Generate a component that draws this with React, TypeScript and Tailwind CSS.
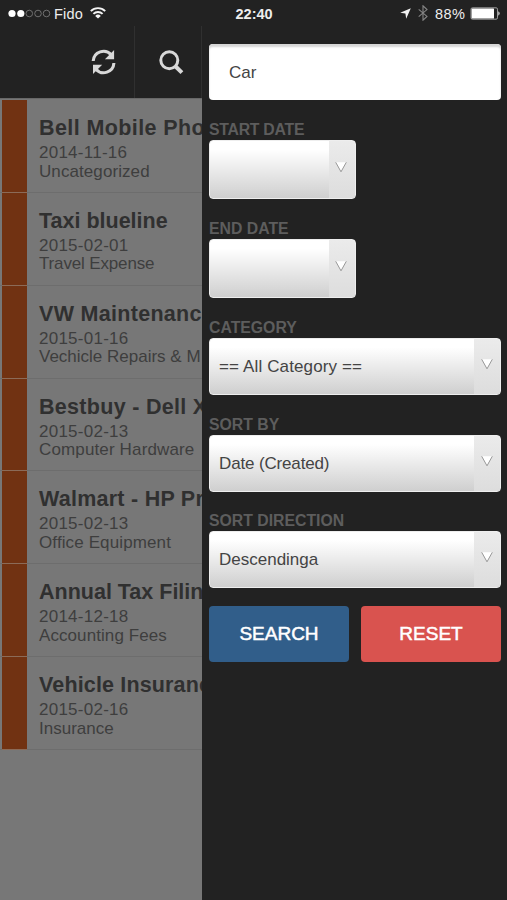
import React from "react";

const expenses = [
  { title: "Bell Mobile Phon", date: "2014-11-16", category: "Uncategorized", titleTracking: "tracking-[0.4px]", tracking: "tracking-[0.08px]" },
  { title: "Taxi blueline", date: "2015-02-01", category: "Travel Expense", titleTracking: "", tracking: "tracking-[-0.15px]" },
  { title: "VW Maintenanc", date: "2015-01-16", category: "Vechicle Repairs & M", titleTracking: "tracking-[0.3px]", tracking: "" },
  { title: "Bestbuy - Dell X", date: "2015-02-13", category: "Computer Hardware", titleTracking: "tracking-[0.3px]", tracking: "tracking-[0.14px]" },
  { title: "Walmart - HP Pr", date: "2015-02-13", category: "Office Equipment", titleTracking: "tracking-[0.25px]", tracking: "tracking-[0.12px]" },
  { title: "Annual Tax Filin", date: "2014-12-18", category: "Accounting Fees", titleTracking: "", tracking: "tracking-[0.08px]" },
  { title: "Vehicle Insuranc", date: "2015-02-16", category: "Insurance", titleTracking: "tracking-[0.15px]", tracking: "" },
];

function StatusBar() {
  return (
    <header className="relative flex h-[26px] shrink-0 items-center text-[14.5px] leading-none text-[#eeeeee]">
      <svg className="ml-[8px] h-[9px] w-[43px]" viewBox="0 0 43 9">
        <circle cx="4" cy="4.5" r="3.6" fill="#fff" />
        <circle cx="12.8" cy="4.5" r="3.6" fill="#fff" />
        {[21.3, 30, 38.5].map((x) => (
          <circle key={x} cx={x} cy="4.5" r="3.3" fill="none" stroke="#777" strokeWidth="0.9" />
        ))}
      </svg>
      <span className="ml-[3px] w-[35px] pt-[2px] tracking-[0.2px]">Fido</span>
      <svg className="ml-px h-[12px] w-[16px]" viewBox="0 0 16 12" fill="none" stroke="#f4f4f4" strokeWidth="1.9">
        <path d="M.8 4.1a10.2 10.2 0 0 1 14.4 0" />
        <path d="M3.4 6.9a6.5 6.5 0 0 1 9.2 0" />
        <path d="M8 11.6 5.2 8.9a4 4 0 0 1 5.6 0z" fill="#f4f4f4" stroke="none" />
      </svg>
      <span className="absolute left-[235.5px] pt-[3px] font-bold">22:40</span>
      <div className="ml-auto flex items-center pr-[6px]">
        <svg className="h-[11px] w-[11px]" viewBox="0 0 11 11">
          <path d="M10.8.2 6.2 10.8 5.4 5.6.2 4.8z" fill="#f2f2f2" />
        </svg>
        <svg className="ml-[7px] h-[16px] w-[10px]" viewBox="0 0 10 16" fill="none" stroke="#858585" strokeWidth="1.1">
          <path d="M.7 4.3 9 11.4 5 15.2V.8l4 3.8-8.3 7.1" />
        </svg>
        <span className="ml-[7px] w-[31px] whitespace-nowrap pt-[2px] tracking-[0.45px]">88%</span>
        <svg className="ml-[4px] h-[13px] w-[31px]" viewBox="0 0 31 13">
          <rect x="1" y=".8" width="26.5" height="11.4" rx="1.4" fill="none" stroke="#aaa" strokeWidth=".9" />
          <rect x="1.6" y="1.4" width="22.4" height="10.2" rx=".6" fill="#fff" />
          <path d="M28.4 4.3q2.4 2.2 0 4.4z" fill="#eee" />
        </svg>
      </div>
    </header>
  );
}

function Arrow({ className = "" }: { className?: string }) {
  return (
    <svg className={"h-[12px] w-[12px] " + className} viewBox="0 0 12 12">
      <path d="M1 1.3h10L6 10.5z" fill="#fff" />
      <path d="M.7 1.3 6 10.8 11.3 1.3" fill="none" stroke="#999" strokeWidth="1" />
    </svg>
  );
}

type FieldProps = { label: string; value?: string; short?: boolean; gap: string; labelTracking?: string; tracking?: string };

function Field({ label, value, short, gap, labelTracking = "", tracking = "" }: FieldProps) {
  return (
    <div className={gap}>
      <div className={"h-[18px] whitespace-nowrap pt-px text-[15.8px] font-bold leading-[18px] text-[#5d5d5d] " + labelTracking}>
        {label}
      </div>
      <button
        className={
          "mt-[2px] flex overflow-hidden rounded-[4px] border border-[#eeeeee] bg-gradient-to-b from-white from-15% to-[#cfcfcf] text-left text-[17px] text-[#444] " +
          (short ? "h-[59px] w-[147px]" : "h-[57px] w-[292px]")
        }
      >
        <span className={"flex h-full flex-1 items-center whitespace-nowrap pl-[9px] pt-px " + tracking}>{value}</span>
        <span className="flex h-full w-[26px] justify-center bg-gradient-to-b from-[#ebebeb] to-[#dddddd]">
          <Arrow className={short ? "mr-[2px] mt-[20px]" : "mt-[19px]"} />
        </span>
      </button>
    </div>
  );
}

export default function App() {
  return (
    <div className="flex h-[900px] w-[507px] flex-col overflow-hidden bg-[#222222] font-['Liberation_Sans',Arial,sans-serif]">
      <StatusBar />
      <div className="flex min-h-0 flex-1">
        <main className="flex w-[202px] shrink-0 flex-col overflow-hidden">
          <nav className="flex h-[72px] shrink-0 border-r border-[#303030]">
            <div className="flex w-[135px] border-r border-[#303030]">
              <svg className="ml-[91px] mt-[23px] h-[26px] w-[26px] shrink-0" viewBox="0 0 26 26">
                <g fill="none" stroke="#d8d8d8" strokeWidth="3.1">
                  <path d="M2.2 12A10.3 10.3 0 0 1 20.2 5.8" />
                  <path d="M22.9 14A10.3 10.3 0 0 1 4.9 20.2" />
                </g>
                <path d="M23.1 1v9.2h-9.2zM2 25v-9.2h9.2z" fill="#d8d8d8" />
              </svg>
            </div>
            <svg className="ml-[23px] mt-[23px] h-[27px] w-[27px]" viewBox="0 0 27 27" fill="none" stroke="#d8d8d8">
              <circle cx="11.3" cy="11.2" r="8.5" strokeWidth="3" />
              <path d="m17.4 17.3 6.5 6.3" strokeWidth="4.1" />
            </svg>
          </nav>
          <div className="flex-1 overflow-hidden border-t border-[#686868] bg-[#777777] pt-px">
            {expenses.map((e) => (
              <article key={e.title} className="flex h-[92.85px] border-b border-[#6d6d6d] pl-[2px]">
                <div className="-mb-px w-[24.5px] shrink-0 border-b border-[#8b6b58] bg-[#713212]" />
                <div className="whitespace-nowrap pl-[12.5px] pt-[15px] text-[17px] leading-[18.5px] text-[#3e3e3e]">
                  <h2 className={"text-[21.5px] font-bold leading-[26px] text-[#303030] " + e.titleTracking}>{e.title}</h2>
                  <p className="pt-[3px] tracking-[0.25px]">{e.date}</p>
                  <p className={e.tracking}>{e.category}</p>
                </div>
              </article>
            ))}
          </div>
        </main>
        <aside className="w-[305px] pl-[7px] pt-[18px]">
          <div className="flex h-[56px] w-[292px] items-center rounded-[4px] bg-white pl-[20px] pt-px text-[17px] text-[#444] shadow-[inset_0_3px_2px_#d6d6d6]">
            Car
          </div>
          <Field label="START DATE" short gap="mt-[20px]" labelTracking="tracking-[-0.25px]" />
          <Field label="END DATE" short gap="mt-[20px]" />
          <Field label="CATEGORY" value="== All Category ==" gap="mt-[20px]" tracking="tracking-[0.13px]" />
          <Field label="SORT BY" value="Date (Created)" gap="mt-[19.5px]" tracking="tracking-[-0.15px]" />
          <Field label="SORT DIRECTION" value="Descendinga" gap="mt-[19.5px]" />
          <div className="mt-[18px] flex w-[292px] gap-3 text-[19px] text-white [-webkit-text-stroke:0.5px_white]">
            <button className="h-[56px] flex-1 rounded-[4px] bg-[#315e8a] pt-px">SEARCH</button>
            <button className="h-[56px] flex-1 rounded-[4px] bg-[#d9534f] pt-px">RESET</button>
          </div>
        </aside>
      </div>
    </div>
  );
}
